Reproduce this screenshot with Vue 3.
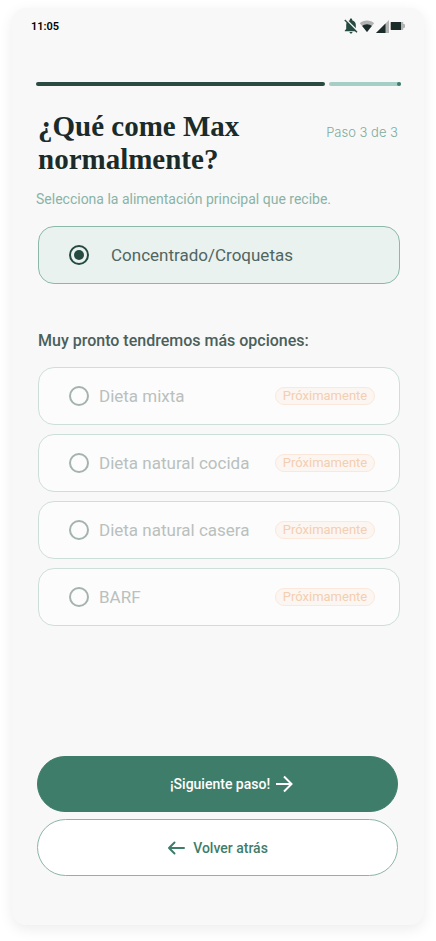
<script setup>
import { ref } from 'vue'

const selected = ref('concentrado')
const upcoming = [
  { id: 'mixta', label: 'Dieta mixta' },
  { id: 'cocida', label: 'Dieta natural cocida' },
  { id: 'casera', label: 'Dieta natural casera' },
  { id: 'barf', label: 'BARF' },
]
</script>

<template>
  <div class="screen">
    <header class="status">
      <span class="time">11:05</span>
      <span class="icons">
        <svg class="bell" width="14" height="16" viewBox="0 0 14 16" aria-hidden="true">
          <path fill="#264a40" d="M7 .5c.7 0 1.200.5 1.200 1.200v.5c2.200.6 3.600 2.300 3.600 4.600V11l1.400 1.500v.7H.8v-.7L2.200 11V6.800c0-2.300 1.400-4 3.600-4.600v-.5C5.800 1 6.300.5 7 .5zM5.500 14h3c0 .8-.7 1.500-1.500 1.500S5.500 14.800 5.500 14z" />
          <path stroke="#f8f8f8" stroke-width="1.500" d="M1.800 1.200L14 13.400" />
          <path stroke="#264a40" stroke-width="1.300" d="M.8 2L13 14.200" />
        </svg>
        <svg width="16" height="12" viewBox="0 0 16 12" aria-hidden="true">
          <path fill="#b3b3b3" d="M8 12L.8 3.200C2.600 1.500 5.200.500 8 .500s5.400 1 7.200 2.700z" />
          <path fill="#1b2b29" d="M8 12L3.200 6.100C4.400 5 6.100 4.300 8 4.300s3.600.7 4.800 1.800z" />
        </svg>
        <svg width="13" height="13" viewBox="0 0 13 13" aria-hidden="true">
          <path fill="#b3b3b3" d="M13 0v13H0z" />
          <path fill="#1b2b29" d="M9.500 3.500V13H0z" />
        </svg>
        <svg width="15" height="8" viewBox="0 0 15 8" aria-hidden="true">
          <path fill="#b3b3b3" d="M1 0h11.500q.8 0 .8.800V2h.7q1 0 1 1v2q0 1-1 1h-.7v1.200q0 .8-.8.800H1q-1 0-1-1V1q0-1 1-1z" />
          <rect fill="#1b2b29" x="1" width="10" height="8" />
        </svg>
      </span>
    </header>

    <main class="content">
      <div class="progress" role="progressbar" aria-label="Progreso" aria-valuenow="3" aria-valuemin="1" aria-valuemax="3">
        <span class="done"></span>
        <span class="rest"></span>
      </div>

      <div class="heading">
        <h1>¿Qué come Max normalmente?</h1>
        <span class="step">Paso 3 de 3</span>
      </div>
      <p class="subtitle">Selecciona la alimentación principal que recibe.</p>

      <form class="form" @submit.prevent>
        <label class="option active">
          <input v-model="selected" type="radio" name="dieta" value="concentrado" />
          <span class="name">Concentrado/Croquetas</span>
        </label>

        <h2>Muy pronto tendremos más opciones:</h2>

        <div class="upcoming">
          <label v-for="item in upcoming" :key="item.id" class="option soon">
            <input v-model="selected" type="radio" name="dieta" :value="item.id" disabled />
            <span class="name">{{ item.label }}</span>
            <span class="badge">Próximamente</span>
          </label>
        </div>

        <div class="actions">
          <button class="btn primary" type="submit">
            <span>¡Siguiente paso!</span>
            <svg width="18" height="18" viewBox="0 0 18 18" aria-hidden="true">
              <path fill="none" stroke="currentColor" stroke-width="2" d="M1 9h15M9 1.500L16.500 9 9 16.500" />
            </svg>
          </button>
          <button class="btn secondary" type="button">
            <svg width="18" height="14" viewBox="0 0 18 14" aria-hidden="true">
              <path fill="none" stroke="currentColor" stroke-width="2" stroke-linecap="round" stroke-linejoin="round" d="M17 7H2M7.500 1.500L2 7l5.500 5.500" />
            </svg>
            <span>Volver atrás</span>
          </button>
        </div>
      </form>
    </main>
  </div>
</template>

<style>
body {
  background: #fff;
}
</style>

<style scoped>
.screen {
  box-sizing: border-box;
  display: flex;
  flex-direction: column;
  min-height: calc(100vh - 24px);
  margin: 8px 12px 16px;
  border-radius: 14px;
  background: #f8f8f8;
  box-shadow: 0 4px 14px rgba(0, 0, 0, 0.08);
  font-family: Roboto, "Liberation Sans", sans-serif;
}
.status {
  display: flex;
  align-items: center;
  justify-content: space-between;
  height: 36px;
  padding: 0 19px;
}
.time {
  font-size: 11px;
  font-weight: 600;
  color: #000;
}
.icons {
  display: flex;
  align-items: center;
  gap: 1px;
}
.content {
  flex: 1;
  display: flex;
  flex-direction: column;
  padding: 38px 24px 49px;
}
.progress {
  display: flex;
  gap: 4px;
  height: 4px;
  margin-right: -1px;
}
.done,
.rest {
  border-radius: 2px;
}
.done {
  flex: 4;
  background: #2a4b41;
}
.rest {
  flex: 1;
  display: flex;
  justify-content: flex-end;
  background: #a5cfc6;
}
.rest::after {
  content: "";
  width: 4px;
  border-radius: 2px;
  background: #3f7d6b;
}
.heading {
  display: flex;
  align-items: flex-start;
  justify-content: space-between;
  gap: 16px;
  margin-top: 24px;
  padding: 0 2px;
}
h1 {
  margin: 0;
  font-family: "Liberation Serif", serif;
  font-size: 29px;
  font-weight: 700;
  line-height: 33px;
  color: #1b2b29;
}
.step {
  flex: none;
  margin-top: 14px;
  font-family: Inter, Roboto, sans-serif;
  font-size: 13px;
  font-weight: 300;
  line-height: 16px;
  color: #7fab9d;
}
.subtitle {
  margin: 13px 0 0;
  font-size: 14px;
  line-height: 20px;
  color: #8ab3a6;
}
.form {
  flex: 1;
  display: flex;
  flex-direction: column;
  margin-top: 17px;
}
.option {
  box-sizing: border-box;
  display: flex;
  align-items: center;
  min-height: 58px;
  margin-left: 2px;
  padding: 0 24px 0 30px;
  border: 1px solid #cddfd9;
  border-radius: 16px;
  background: #fcfcfc;
  font-size: 17px;
  line-height: 24px;
}
.option input {
  appearance: none;
  flex: none;
  display: grid;
  place-items: center;
  width: 20px;
  height: 20px;
  margin: 0;
  border: 2px solid #a5b3ae;
  border-radius: 50%;
}
.option input:checked {
  border-color: #264a40;
}
.option input:checked::before {
  content: "";
  width: 10px;
  height: 10px;
  border-radius: 50%;
  background: #264a40;
}
.active {
  gap: 22px;
  border-color: #8cb8aa;
  background: #e9f2ef;
  color: #51655f;
}
.soon {
  gap: 10px;
  color: #b9c0bd;
}
.badge {
  box-sizing: border-box;
  min-width: 100px;
  margin-left: auto;
  border: 1px solid #fbe8da;
  border-radius: 9px;
  background: #fbf6f1;
  font-size: 13px;
  line-height: 16px;
  text-align: center;
  color: #f4ceb1;
}
h2 {
  margin: 45px 2px 14px;
  font-size: 16px;
  font-weight: 500;
  line-height: 24px;
  color: #4b605a;
}
.upcoming {
  display: flex;
  flex-direction: column;
  gap: 9px;
}
.actions {
  display: flex;
  flex-direction: column;
  gap: 7px;
  margin-top: auto;
  padding: 24px 2px 0 1px;
}
.btn {
  display: flex;
  align-items: center;
  justify-content: center;
  height: 56px;
  border: 1px solid #3f7d6b;
  border-radius: 29px;
  font-family: inherit;
  font-size: 14px;
  font-weight: 500;
  line-height: 20px;
}
.primary {
  gap: 5px;
  padding: 0 0 0 28px;
  background: #3f7d6b;
  color: #fff;
}
.secondary {
  gap: 8px;
  height: 57px;
  padding: 0;
  border-color: #8cb5a8;
  background: #fff;
  color: #3f7d6b;
}
</style>
